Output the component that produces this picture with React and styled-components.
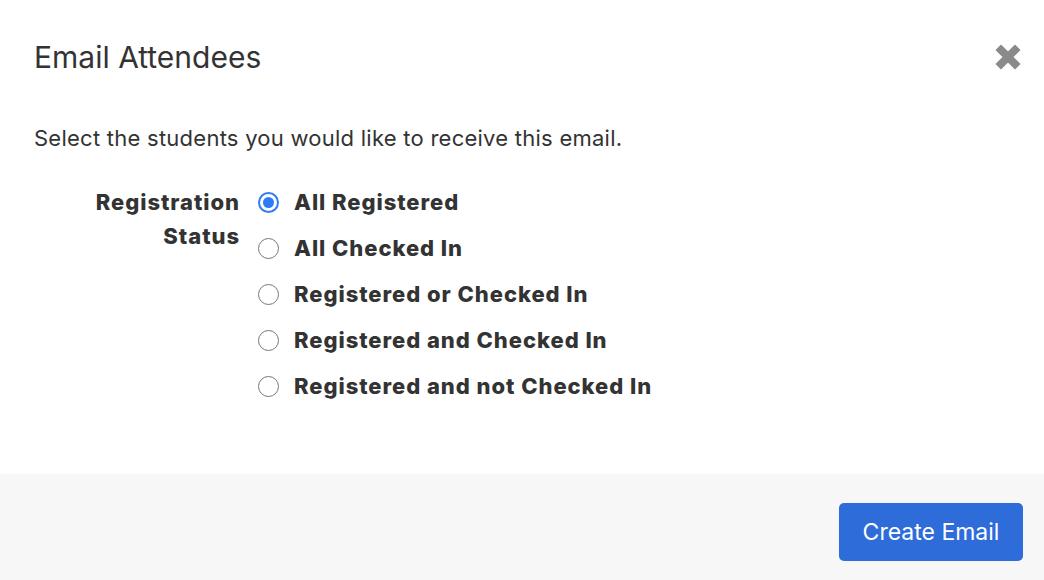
import React, { useState } from "react";
import styled, { createGlobalStyle } from "styled-components";

const Global = createGlobalStyle`
  html, body { margin: 0; padding: 0; background: #fff; }
  body { font-family: Inter, "Noto Sans", sans-serif; color: #333; }
`;

const Modal = styled.div`
  width: 1044px;
  height: 580px;
  display: flex;
  flex-direction: column;
  background: #fff;
`;

const Header = styled.div`
  display: flex;
  align-items: center;
  justify-content: space-between;
  padding: 38px 22px 0 34px;
  height: 38px;
`;

const Title = styled.h1`
  margin: 0;
  font-size: 30px;
  font-weight: 400;
  color: #333;
  line-height: 38px;
`;

const Close = styled.button`
  border: 0;
  background: none;
  padding: 0;
  width: 28px;
  height: 28px;
  display: flex;
  align-items: center;
  justify-content: center;
  cursor: pointer;
`;

const Body = styled.div`
  flex: 1;
  padding: 47px 34px 0 34px;
`;

const Intro = styled.p`
  margin: 0 0 32px 0;
  font-size: 22px;
  letter-spacing: 0.25px;
  line-height: 30px;
  color: #333;
`;

const FormRow = styled.div`
  display: grid;
  grid-template-columns: 206px 1fr;
  column-gap: 18px;
`;

const Label = styled.div`
  text-align: right;
  font-size: 22px;
  font-weight: 800;
  letter-spacing: 0.95px;
  line-height: 34px;
  color: #333;
  padding-left: 40px;
`;

const Options = styled.div`
  display: flex;
  flex-direction: column;
`;

const Option = styled.label`
  display: flex;
  align-items: center;
  gap: 15px;
  height: 46px;
  margin-top: ${(p) => (p.$first ? "-6px" : "0")};
  font-size: 22px;
  font-weight: 800;
  letter-spacing: 0.95px;
  color: #333;
  cursor: pointer;
`;

const Radio = styled.span`
  box-sizing: border-box;
  width: 21px;
  height: 21px;
  border-radius: 50%;
  border: ${(p) => (p.$checked ? "2px solid #2f7bf5" : "1.5px solid #767676")};
  display: flex;
  align-items: center;
  justify-content: center;
  background: #fff;
  flex-shrink: 0;
  &::after {
    content: "";
    width: 11px;
    height: 11px;
    border-radius: 50%;
    background: ${(p) => (p.$checked ? "#2f7bf5" : "transparent")};
  }
`;

const Footer = styled.div`
  height: 106px;
  background: #f7f7f7;
  display: flex;
  justify-content: flex-end;
  align-items: flex-start;
  padding: 29px 21px 0 0;
  box-sizing: border-box;
`;

const Button = styled.button`
  height: 58px;
  width: 184px;
  border: 0;
  border-radius: 5px;
  background: #2e6cda;
  color: #fff;
  font-family: Inter, "Noto Sans", sans-serif;
  font-size: 23px;
  font-weight: 400;
  cursor: pointer;
`;

const options = [
  "All Registered",
  "All Checked In",
  "Registered or Checked In",
  "Registered and Checked In",
  "Registered and not Checked In",
];

export default function App() {
  const [sel, setSel] = useState(0);
  return (
    <>
      <Global />
      <Modal>
        <Header>
          <Title>Email Attendees</Title>
          <Close aria-label="Close">
            <svg width="28" height="28" viewBox="0 0 28 28">
              <path
                d="M2.5 7 L7 2.5 L14 9.5 L21 2.5 L25.5 7 L18.5 14 L25.5 21 L21 25.5 L14 18.5 L7 25.5 L2.5 21 L9.5 14 Z"
                fill="#8a8a8a"
                stroke="#8a8a8a"
                strokeWidth="1.5"
                strokeLinejoin="round"
              />
            </svg>
          </Close>
        </Header>
        <Body>
          <Intro>Select the students you would like to receive this email.</Intro>
          <FormRow>
            <Label>Registration Status</Label>
            <Options>
              {options.map((o, i) => (
                <Option key={o} $first={i === 0} onClick={() => setSel(i)}>
                  <Radio $checked={sel === i} />
                  {o}
                </Option>
              ))}
            </Options>
          </FormRow>
        </Body>
        <Footer>
          <Button>Create Email</Button>
        </Footer>
      </Modal>
    </>
  );
}
